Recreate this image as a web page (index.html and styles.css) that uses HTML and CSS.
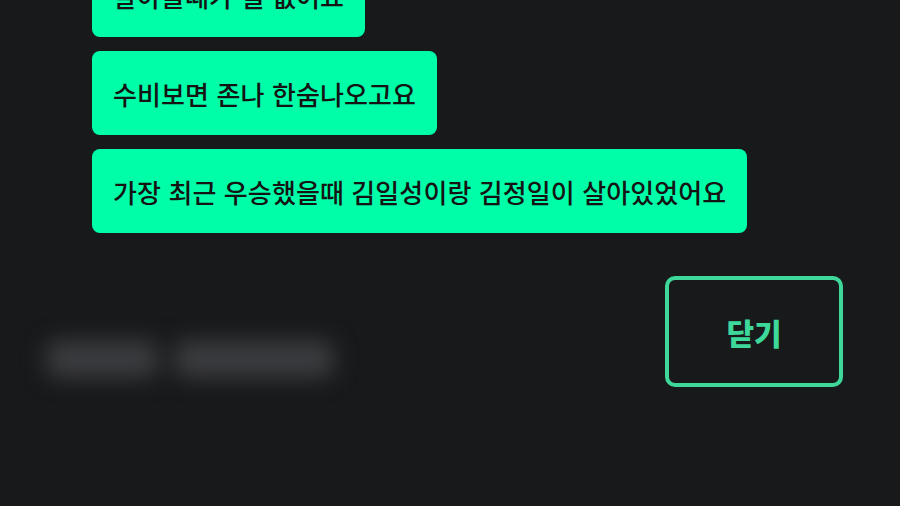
FILE: index.html
```
<!DOCTYPE html>
<html lang="ko">
<head>
<meta charset="utf-8">
<link rel="stylesheet" href="styles.css">
</head>
<body>
<div class="screen">
  <div class="chat">
    <div class="bubble first">알아볼때가 될 없어요</div>
    <div class="bubble">수비보면 존나 한숨나오고요</div>
    <div class="bubble">가장 최근 우승했을때 김일성이랑 김정일이 살아있었어요</div>
  </div>
  <div class="bottom">
    <div class="blurred">
      <span class="blob b1"></span>
      <span class="blob b2"></span>
    </div>
    <button class="close">닫기</button>
  </div>
</div>
</body>
</html>
```
FILE: styles.css
```
html, body {
  margin: 0;
  padding: 0;
  background: #18191b;
  width: 900px;
  height: 506px;
  overflow: hidden;
  font-family: "Noto Sans CJK KR", "Noto Sans", sans-serif;
}
.screen {
  width: 900px;
  height: 506px;
  overflow: hidden;
}
.chat {
  display: flex;
  flex-direction: column;
  align-items: flex-start;
  gap: 14px;
  padding-left: 92px;
  margin-top: -47px;
}
.bubble {
  height: 84px;
  box-sizing: border-box;
  display: flex;
  align-items: center;
  padding: 0 21px;
  background: #00fda8;
  color: #141414;
  border-radius: 8px;
  font-size: 26px;
  font-weight: 500;
  letter-spacing: 0.1px;
  white-space: nowrap;
}
.bottom {
  display: flex;
  justify-content: space-between;
  align-items: flex-start;
  padding: 43px 57px 0 46px;
}
.blurred {
  display: flex;
  gap: 16px;
  margin-top: 64px;
  filter: blur(11px);
}
.blob {
  display: block;
  height: 38px;
  background: #3b3c3f;
  border-radius: 12px;
}
.b1 { width: 112px; }
.b2 { width: 160px; }
.close {
  width: 178px;
  height: 111px;
  box-sizing: border-box;
  background: transparent;
  border: 4px solid #3dd89a;
  border-radius: 10px;
  color: #3dd89a;
  font-family: "Noto Sans CJK KR", "Noto Sans", sans-serif;
  font-size: 30px;
  font-weight: 900;
  padding: 0;
}
```
